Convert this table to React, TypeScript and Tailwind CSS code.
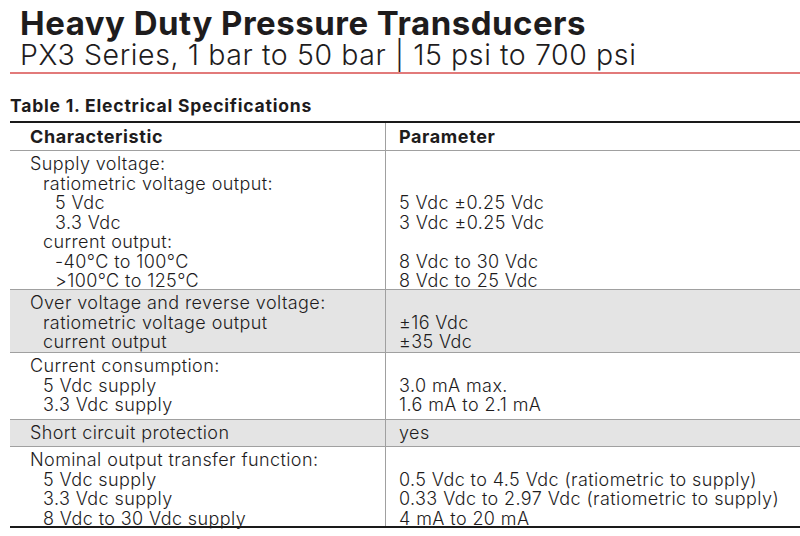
import React from "react";

type Line = { label: string; indent?: number; value?: string };

type Row = { lines: Line[]; shaded?: boolean; height: string };

const rows: Row[] = [
  {
    height: "h-[139px]",
    lines: [
      { label: "Supply voltage:" },
      { label: "ratiometric voltage output:", indent: 1 },
      { label: "5 Vdc", indent: 2, value: "5 Vdc ±0.25 Vdc" },
      { label: "3.3 Vdc", indent: 2, value: "3 Vdc ±0.25 Vdc" },
      { label: "current output:", indent: 1 },
      { label: "-40°C to 100°C", indent: 2, value: "8 Vdc to 30 Vdc" },
      { label: ">100°C to 125°C", indent: 2, value: "8 Vdc to 25 Vdc" },
    ],
  },
  {
    height: "h-[63px]",
    shaded: true,
    lines: [
      { label: "Over voltage and reverse voltage:" },
      { label: "ratiometric voltage output", indent: 1, value: "±16 Vdc" },
      { label: "current output", indent: 1, value: "±35 Vdc" },
    ],
  },
  {
    height: "h-[67px]",
    lines: [
      { label: "Current consumption:" },
      { label: "5 Vdc supply", indent: 1, value: "3.0 mA max." },
      { label: "3.3 Vdc supply", indent: 1, value: "1.6 mA to 2.1 mA" },
    ],
  },
  {
    height: "h-[27px]",
    shaded: true,
    lines: [{ label: "Short circuit protection", value: "yes" }],
  },
  {
    height: "h-[81px]",
    lines: [
      { label: "Nominal output transfer function:" },
      { label: "5 Vdc supply", indent: 1, value: "0.5 Vdc to 4.5 Vdc (ratiometric to supply)" },
      { label: "3.3 Vdc supply", indent: 1, value: "0.33 Vdc to 2.97 Vdc (ratiometric to supply)" },
      { label: "8 Vdc to 30 Vdc supply", indent: 1, value: "4 mA to 20 mA" },
    ],
  },
];

const indentClass = ["pl-0", "pl-[13px]", "pl-[25px]"];

function SpecRow({ row, last }: { row: Row; last: boolean }) {
  return (
    <div
      className={`flex ${row.height} ${row.shaded ? "bg-[#e4e4e4]" : "bg-white"} ${
        last ? "border-b-2 border-[#1a1a1a]" : "border-b border-[#a0a0a0]"
      }`}
    >
      <div className="w-[376px] shrink-0 border-r border-[#a0a0a0] pl-[20px] pt-[3px]">
        {row.lines.map((l, i) => (
          <div key={i} className={`h-[19.5px] whitespace-pre ${indentClass[l.indent ?? 0]}`}>
            {l.label}
          </div>
        ))}
      </div>
      <div className="flex-1 pl-[13px] pt-[3px]">
        {row.lines.map((l, i) => (
          <div key={i} className="h-[19.5px] whitespace-pre">
            {l.value ?? "\u00a0"}
          </div>
        ))}
      </div>
    </div>
  );
}

export default function App() {
  return (
    <div
      className="w-[800px] h-[536px] overflow-hidden bg-white text-[#1e1c1d]"
      style={{ fontFamily: "Inter, 'Open Sans', sans-serif" }}
    >
      {/* heading */}
      <div className="pl-[20px] pt-[6px]">
        <h1 className="text-[33px] font-bold leading-[34px] tracking-[0.5px]">
          Heavy Duty Pressure Transducers
        </h1>
        <p className="text-[28.5px] font-light leading-[30px] tracking-[0.6px]">
          PX3 Series, 1 bar to 50 bar | 15 psi to 700 psi
        </p>
      </div>
      <div className="ml-[10px] mt-[2px] h-[2px] bg-[#e27a7a]" />

      <h2 className="pl-[10px] mt-[22px] text-[17.5px] font-bold leading-[20px] tracking-[0.8px]">
        Table 1. Electrical Specifications
      </h2>

      {/* table */}
      <div className="ml-[10px] mt-[5px] border-t-2 border-[#1a1a1a] text-[18px] font-light leading-[19.5px] tracking-[0.4px]">
        <div className="flex h-[28px] border-b border-[#a0a0a0] font-bold tracking-[0.6px]">
          <div className="w-[376px] shrink-0 border-r border-[#a0a0a0] pl-[20px] pt-[4px]">
            Characteristic
          </div>
          <div className="flex-1 pl-[13px] pt-[4px]">Parameter</div>
        </div>
        {rows.map((r, i) => (
          <SpecRow key={i} row={r} last={i === rows.length - 1} />
        ))}
      </div>
    </div>
  );
}
